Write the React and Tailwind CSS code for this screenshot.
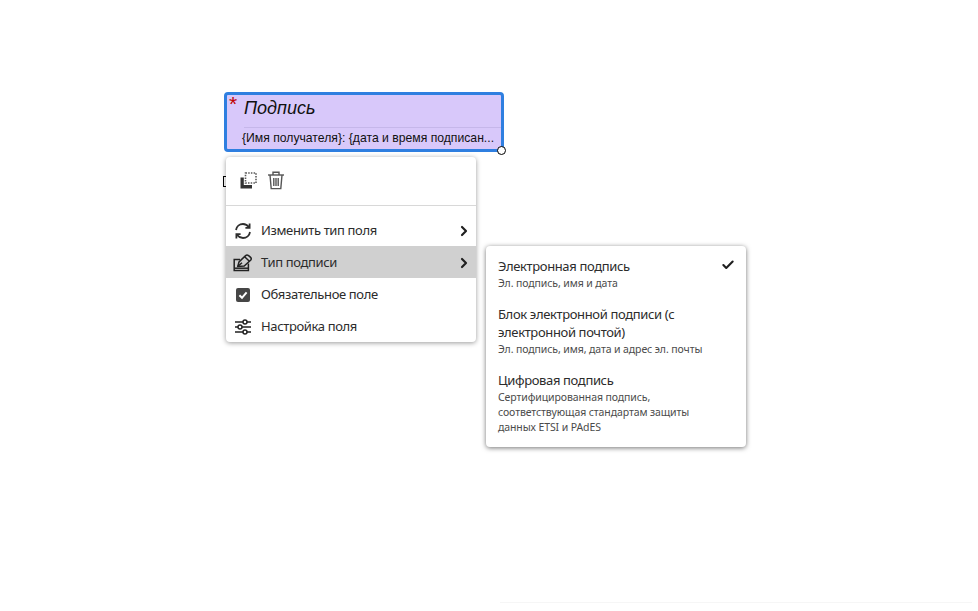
import { Check, ChevronRight } from 'lucide-react';

const menuFont = "font-['Noto_Sans',sans-serif]";

function RefreshIcon() {
  return (
    <svg width="18" height="18" viewBox="0 0 18 18" fill="none" stroke="#2e2e2e" strokeWidth="1.8">
      <path d="M2 8 C2.5 4.5 5.5 2 9 2 C11.5 2 13.5 3.2 15 5.2" />
      <path d="M16 10 C15.5 13.5 12.5 16 9 16 C6.5 16 4.5 14.8 3 12.8" />
      <path d="M15.6 1.4 V5.8 H11.4" strokeWidth="1.8" />
      <path d="M2.4 16.6 V12.2 H6.6" strokeWidth="1.8" />
    </svg>
  );
}

function SignIcon() {
  return (
    <svg width="20" height="18" viewBox="0 0 20 18" fill="none" stroke="#222" strokeWidth="1.5">
      <path d="M7 5.5 H1.2 V16.6 H15.4 V9.5" />
      <path d="M1.2 14.2 H15.4" />
      <path d="M4.8 12.4 L6 8 L12.6 1.6 C13.4 0.9 14.6 0.9 15.6 1.6 L17.6 3.4 C18.4 4.2 18.4 5.2 17.8 6 L11.2 12 Z" />
      <path d="M4.8 12.4 L9 8.8" />
      <path d="M11.6 2.8 L16.4 7.2" />
    </svg>
  );
}

function CheckboxIcon() {
  return (
    <svg width="14" height="14" viewBox="0 0 14 14">
      <rect width="14" height="14" rx="2" fill="#464646" />
      <path d="M3.4 7.2 L6 9.8 L10.6 4.4" fill="none" stroke="#fff" strokeWidth="2" />
    </svg>
  );
}

function SlidersIcon() {
  return (
    <svg width="18" height="16" viewBox="0 0 18 16" fill="none" stroke="#222" strokeWidth="1.5">
      <path d="M1 3 H9 M13 3 H17 M1 8 H4 M8 8 H17 M1 13 H9 M13 13 H17" />
      <circle cx="11" cy="3" r="2" />
      <circle cx="6" cy="8" r="2" />
      <circle cx="11" cy="13" r="2" />
    </svg>
  );
}

function DuplicateIcon() {
  return (
    <svg width="17" height="17" viewBox="0 0 17 17" fill="none">
      <path d="M0.5 5.5 H3.8 V13 H12 V16.5 H0.5 Z" fill="#333" />
      <rect x="5.5" y="1" width="10.5" height="10" stroke="#5a5a5a" strokeWidth="1.6" strokeDasharray="1.5 1.2" />
    </svg>
  );
}

function TrashIcon() {
  return (
    <svg width="18" height="19" viewBox="0 0 18 19" fill="none" stroke="#555" strokeWidth="1.4">
      <path d="M1 4 H17" />
      <path d="M6 4 V1.2 H12 V4" />
      <path d="M3 4 L4.2 17.6 H13.8 L15 4" />
      <path d="M6.8 7 V15 M9 7 V15 M11.2 7 V15" />
    </svg>
  );
}

function MenuRow({ icon, label, active, arrow }) {
  return (
    <div className={`h-8 flex items-center pt-[2px] pr-[4px] ${active ? 'bg-[#d0d0d0]' : ''}`}>
      <div className="w-[35px] flex justify-center pr-[1px] shrink-0">{icon}</div>
      <span className="flex-1 text-[13px] tracking-[-0.36px] text-[#2c2c2c]">{label}</span>
      {arrow && <ChevronRight size={16} strokeWidth={3.2} className="text-[#1f1f1f]" />}
    </div>
  );
}

function SubRow({ title, desc, check }) {
  return (
    <div className="relative">
      <div className="text-[13px] leading-[18px] tracking-[-0.36px] text-[#2c2c2c] pr-[12px]">{title}</div>
      <div className="text-[10.5px] leading-[15px] tracking-[-0.1px] text-[#4b4b4b] mt-[1px] pr-[30px]">{desc}</div>
      {check && (
        <Check size={14} strokeWidth={3.6} className="absolute right-[8px] top-[1px] text-[#1f1f1f]" />
      )}
    </div>
  );
}

export default function App() {
  return (
    <div className="relative w-[978px] h-[611px] bg-white overflow-hidden pt-[92px] pl-[224px]">
      {/* signature field */}
      <div className="relative w-[280px] h-[60px] rounded-[4px] border-[3px] border-[#2f7fe0] bg-[#d8c8fa] font-['Liberation_Sans',sans-serif] text-[#111]">
        <span className="absolute left-[2px] top-[-3px] text-[21px] leading-[24px] text-[#c00000]">*</span>
        <div className="ml-[17px] h-[33px] border-b border-[#c6b7ea] text-[18px] leading-[26px] italic">Подпись</div>
        <div className="ml-[15px] text-[12.2px] leading-[20px] whitespace-nowrap">{'{Имя получателя}: {дата и время подписан...'}</div>
        <span className="absolute right-[-5px] bottom-[-6px] w-[9px] h-[9px] rounded-full bg-white border border-black" />
      </div>

      <span className="absolute left-[223px] top-[176px] w-[4px] h-[11px] border border-black border-r-0" />

      {/* context menu */}
      <div className={`relative ml-[2px] mt-[5px] w-[250px] h-[185px] bg-white rounded-[4px] shadow-[0_1px_5px_rgba(0,0,0,0.4)] ${menuFont}`}>
        <div className="h-[49px] border-b border-[#d8d8d8] flex items-center gap-[10px] pl-[14px] pb-[1px]">
          <DuplicateIcon />
          <TrashIcon />
        </div>
        <div className="pt-[8px]">
          <MenuRow icon={<RefreshIcon />} label="Изменить тип поля" arrow />
          <MenuRow icon={<SignIcon />} label="Тип подписи" arrow active />
          <MenuRow icon={<CheckboxIcon />} label="Обязательное поле" />
          <MenuRow icon={<SlidersIcon />} label="Настройка поля" />
        </div>
      </div>

      {/* signature type submenu */}
      <div className={`absolute left-[486px] top-[246px] w-[260px] h-[201px] bg-white rounded-[4px] shadow-[0_1px_5px_rgba(0,0,0,0.55)] pl-[12px] pr-[3px] pt-[11px] flex flex-col gap-[14px] ${menuFont}`}>
        <SubRow title="Электронная подпись" desc="Эл. подпись, имя и дата" check />
        <SubRow title="Блок электронной подписи (с электронной почтой)" desc="Эл. подпись, имя, дата и адрес эл. почты" />
        <SubRow title="Цифровая подпись" desc="Сертифицированная подпись, соответствующая стандартам защиты данных ETSI и PAdES" />
      </div>

      <div className="absolute left-[500px] right-[6px] top-[602px] h-[1px] bg-[#f6f6f6]" />
    </div>
  );
}
